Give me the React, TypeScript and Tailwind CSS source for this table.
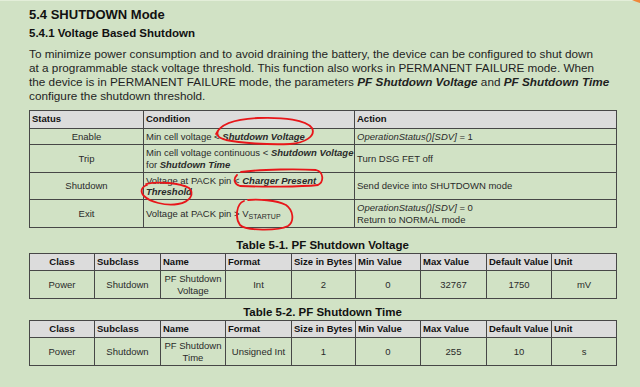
import React from "react";

const border = "border border-[#474747]";

const paramCols = [
  "Class",
  "Subclass",
  "Name",
  "Format",
  "Size in Bytes",
  "Min Value",
  "Max Value",
  "Default Value",
  "Unit",
];
const colW = [65, 66, 65, 66, 64, 65, 66, 65, 65];

interface ParamRow {
  cls: string;
  subclass: string;
  name: [string, string];
  format: string;
  size: string;
  min: string;
  max: string;
  def: string;
  unit: string;
}

function ParamTable({ title, row }: { title: string; row: ParamRow }) {
  const cells = [row.cls, row.subclass, null, row.format, row.size, row.min, row.max, row.def, row.unit];
  return (
    <div className="flex flex-col w-[587px]">
      <div className="text-center font-bold text-[11.5px] leading-[14px] text-[#111]">{title}</div>
      <table className="border-collapse table-fixed w-[587px] text-[9.5px] text-[#2a2a2a] mt-[1px] whitespace-nowrap">
        <colgroup>
          {colW.map((w, i) => (
            <col key={i} style={{ width: w }} />
          ))}
        </colgroup>
        <thead>
          <tr className="bg-[#dcdcdc] h-[17px]">
            {paramCols.map((c, i) => (
              <th
                key={c}
                className={`${border} font-bold px-[2px] py-0 leading-[12px] text-[#111] ${i === 0 ? "text-center" : "text-left"}`}
              >
                {c}
              </th>
            ))}
          </tr>
        </thead>
        <tbody>
          <tr className="h-[28px]">
            {cells.map((c, i) => (
              <td key={i} className={`${border} text-center px-[2px] py-0 leading-[11.5px]`}>
                {c === null ? (
                  <>
                    {row.name[0]}
                    <br />
                    {row.name[1]}
                  </>
                ) : (
                  c
                )}
              </td>
            ))}
          </tr>
        </tbody>
      </table>
    </div>
  );
}

function Annotations() {
  return (
    <svg className="absolute inset-0 pointer-events-none" width="640" height="387" viewBox="0 0 640 387" fill="none">
      <g stroke="#e8161a" strokeWidth="1.8" strokeLinecap="round" strokeLinejoin="round">
        {/* Shutdown Voltage */}
        <path d="M216 134 C220 124 236 119 258 118 C284 117 306 120 312 128 C316 136 305 143 290 144 C268 145 240 143 226 140 C219 138 216 136 218 131" />
        {/* Charger Present */}
        <path d="M241 172 C262 169 300 169 316 170 C324 172 324 182 318 185 C300 187 262 187 240 186 C234 184 233 179 237 175" />
        {/* Threshold */}
        <path d="M146 184 C158 181 180 183 189 188 C195 194 190 202 178 204 C165 206 150 202 144 196 C140 192 141 187 147 185" />
        {/* V STARTUP */}
        <path d="M244 201 C236 204 235 218 240 225 C246 231 278 231 288 226 C295 221 293 210 286 205 C276 200 258 199 248 200" />
      </g>
      <path d="M632 0 L640 0 L640 3 C637 2 634 1 632 0 Z" fill="#f0883a" />
    </svg>
  );
}

export default function App() {
  return (
    <div
      className="relative w-[640px] h-[387px] overflow-hidden bg-[#d1e2c5] text-[#1f1f1f]"
      style={{ fontFamily: '"Liberation Sans", Arial, sans-serif' }}
    >
      <div className="h-[1px] bg-[#e3eed9]" />
      <div className="pl-[29px] pt-[6px] flex flex-col">
        <h1 className="font-bold text-[13px] leading-[16px] text-[#111]">5.4 SHUTDOWN Mode</h1>
        <h2 className="font-bold text-[11.5px] leading-[14px] text-[#111] mt-[3px]">5.4.1 Voltage Based Shutdown</h2>
        <p className="text-[11.75px] leading-[14px] mt-[7px] text-[#1f1f1f] whitespace-nowrap">
          To minimize power consumption and to avoid draining the battery, the device can be configured to shut down
          <br />
          at a programmable stack voltage threshold. This function also works in PERMANENT FAILURE mode. When
          <br />
          the device is in PERMANENT FAILURE mode, the parameters <b><i>PF Shutdown Voltage</i></b> and{" "}
          <b><i>PF Shutdown Time</i></b>
          <br />
          configure the shutdown threshold.
        </p>

        <table className="border-collapse table-fixed w-[587px] text-[9.5px] text-[#2a2a2a] mt-[7px] whitespace-nowrap">
          <colgroup>
            <col style={{ width: 114 }} />
            <col style={{ width: 211 }} />
            <col style={{ width: 262 }} />
          </colgroup>
          <thead>
            <tr className="bg-[#dcdcdc] h-[18px]">
              <th className={`${border} text-left font-bold px-[2px] py-0 text-[#111]`}>Status</th>
              <th className={`${border} text-left font-bold px-[2px] py-0 text-[#111]`}>Condition</th>
              <th className={`${border} text-left font-bold px-[2px] py-0 text-[#111]`}>Action</th>
            </tr>
          </thead>
          <tbody className="leading-[12px]">
            <tr className="h-[16px]">
              <td className={`${border} text-center py-0`}>Enable</td>
              <td className={`${border} px-[2px] py-0`}>
                Min cell voltage &lt; <b><i>Shutdown Voltage</i></b>
              </td>
              <td className={`${border} px-[2px] py-0`}>
                <i>OperationStatus()[SDV]</i> = 1
              </td>
            </tr>
            <tr className="h-[28px]">
              <td className={`${border} text-center py-0`}>Trip</td>
              <td className={`${border} px-[2px] py-0 leading-[11.5px]`}>
                Min cell voltage continuous &lt; <b><i>Shutdown Voltage</i></b>
                <br />
                for <b><i>Shutdown Time</i></b>
              </td>
              <td className={`${border} px-[2px] py-0`}>Turn DSG FET off</td>
            </tr>
            <tr className="h-[27px]">
              <td className={`${border} text-center py-0`}>Shutdown</td>
              <td className={`${border} px-[2px] py-0 leading-[11.5px]`}>
                Voltage at PACK pin &lt; <b><i>Charger Present</i></b>
                <br />
                <b><i>Threshold</i></b>
              </td>
              <td className={`${border} px-[2px] py-0`}>Send device into SHUTDOWN mode</td>
            </tr>
            <tr className="h-[28px]">
              <td className={`${border} text-center py-0`}>Exit</td>
              <td className={`${border} px-[2px] py-0`}>
                Voltage at PACK pin &gt; V<sub className="text-[7px] align-baseline relative top-[2px]">STARTUP</sub>
              </td>
              <td className={`${border} px-[2px] py-0`}>
                <i>OperationStatus()[SDV]</i> = 0
                <br />
                Return to NORMAL mode
              </td>
            </tr>
          </tbody>
        </table>

        <div className="mt-[10px]">
          <ParamTable
            title="Table 5-1. PF Shutdown Voltage"
            row={{
              cls: "Power",
              subclass: "Shutdown",
              name: ["PF Shutdown", "Voltage"],
              format: "Int",
              size: "2",
              min: "0",
              max: "32767",
              def: "1750",
              unit: "mV",
            }}
          />
        </div>
        <div className="mt-[6px]">
          <ParamTable
            title="Table 5-2. PF Shutdown Time"
            row={{
              cls: "Power",
              subclass: "Shutdown",
              name: ["PF Shutdown", "Time"],
              format: "Unsigned Int",
              size: "1",
              min: "0",
              max: "255",
              def: "10",
              unit: "s",
            }}
          />
        </div>
      </div>
      <Annotations />
    </div>
  );
}
